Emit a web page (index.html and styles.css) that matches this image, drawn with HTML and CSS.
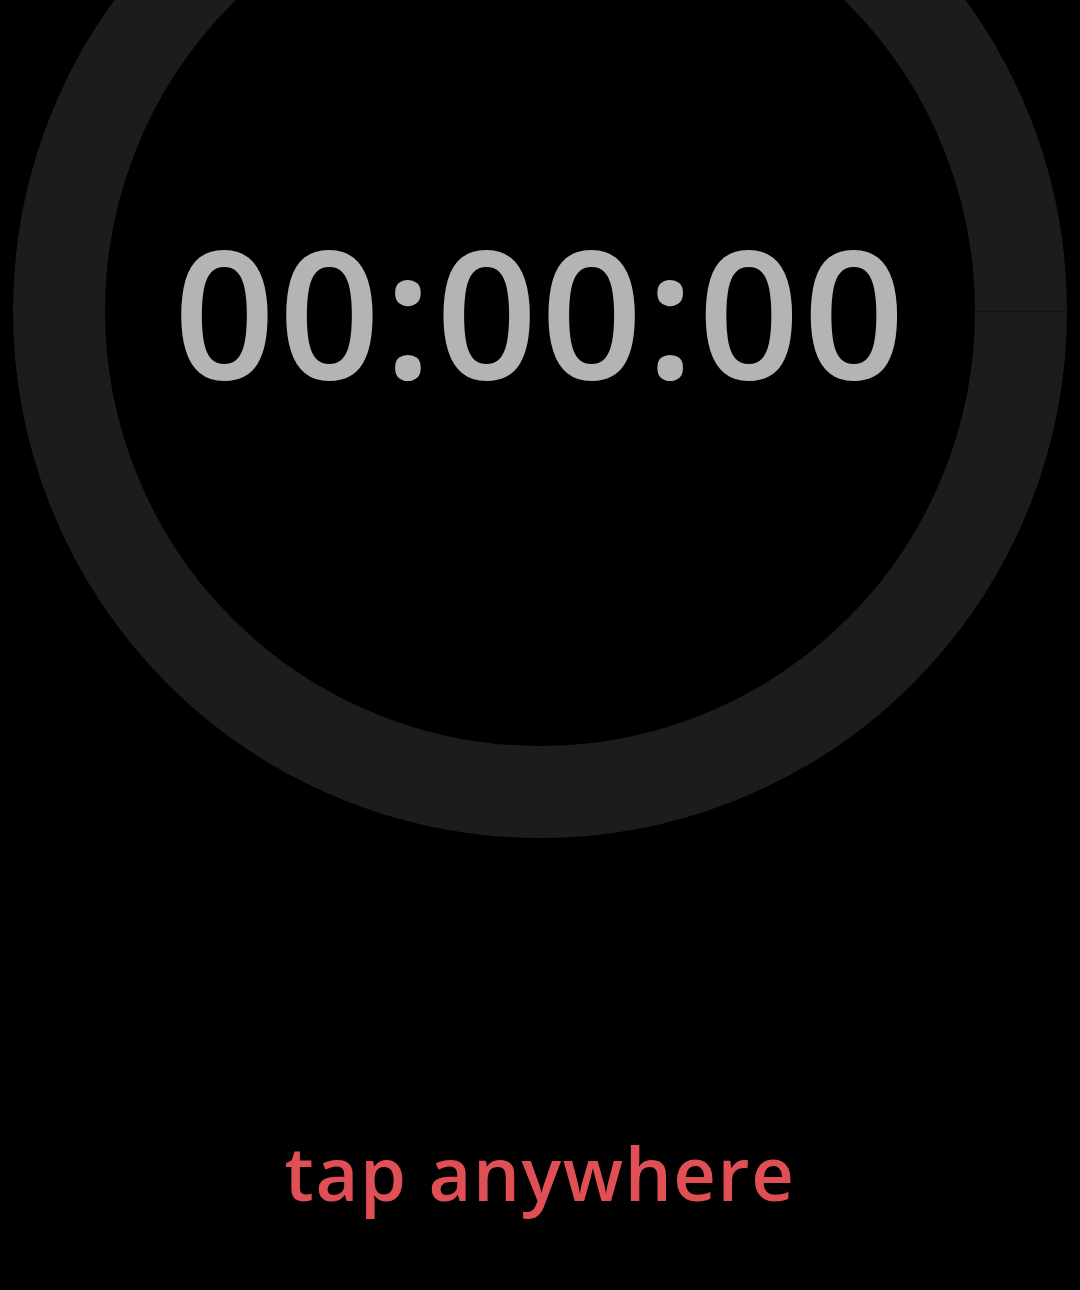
FILE: index.html
```html
<!DOCTYPE html>
<html>
<head>
<meta charset="utf-8">
<link rel="stylesheet" href="styles.css">
</head>
<body>
<main class="screen">
  <section class="dial">
    <svg class="ring" width="1080" height="838" viewBox="0 0 1080 838">
      <circle cx="540" cy="311" r="481" fill="none" stroke="#1c1c1c" stroke-width="92"/>
      <line x1="975" y1="311.5" x2="1067" y2="311.5" stroke="#141414" stroke-width="1.5"/>
    </svg>
    <div class="time">00:00:00</div>
  </section>
  <p class="hint">tap anywhere</p>
</main>
</body>
</html>
```
FILE: styles.css
```css
html, body {
  margin: 0;
  padding: 0;
  background: #000;
}
.screen {
  width: 1080px;
  height: 1290px;
  display: flex;
  flex-direction: column;
  align-items: center;
  overflow: hidden;
}
.dial {
  position: relative;
  width: 1080px;
  height: 838px;
}
.ring {
  display: block;
}
.time {
  position: absolute;
  left: 0;
  right: 0;
  top: 185px;
  text-align: center;
  font-family: "Open Sans", "Noto Sans", sans-serif;
  font-size: 178px;
  font-weight: 600;
  letter-spacing: 3.3px;
  text-indent: 1.5px;
  line-height: 250px;
  color: #b4b4b4;
}
.hint {
  margin: 285px 0 0 0;
  font-family: "Open Sans", "Noto Sans", sans-serif;
  font-size: 74px;
  font-weight: 600;
  letter-spacing: 1.6px;
  line-height: 100px;
  color: #e04f54;
}
```
